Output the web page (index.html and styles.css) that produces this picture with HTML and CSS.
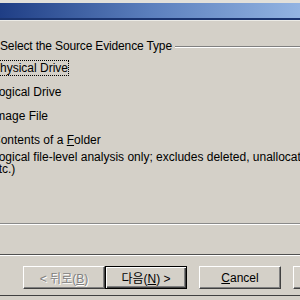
FILE: index.html
```html
<!DOCTYPE html>
<html lang="ko">

<head>
    <meta charset="UTF-8">
    <meta name="viewport" content="width=device-width, initial-scale=1.0">
    <title>Evidence Wizard</title>
    <link rel="stylesheet" href="styles.css">
</head>

<body>
    <div class="dialog">
        <div class="frame-top"></div>
        <div class="titlebar"></div>

        <div class="group">
            <div class="group-title"><span>Select the Source Evidence Type</span></div>
            <div class="options">
                <div class="option"><span class="focus">Physical Drive</span></div>
                <div class="option">Logical Drive</div>
                <div class="option">Image File</div>
                <div class="option">Contents of a <u>F</u>older</div>
                <div class="note">Logical file-level analysis only; excludes deleted, unallocated,<br>etc.)</div>
            </div>
        </div>

        <div class="separator"></div>

        <div class="buttons">
            <button class="btn btn-disabled" type="button">&lt; 뒤로(<u>B</u>)</button>
            <button class="btn btn-default" type="button">다음(<u>N</u>) &gt;</button>
            <button class="btn btn-gap" type="button"><u>C</u>ancel</button>
            <button class="btn btn-gap" type="button">Help</button>
        </div>

        <div class="frame-bottom"></div>
    </div>
</body>

</html>
```

FILE: styles.css
```css
body {
    margin: 0;
    padding: 0;
    background-color: #d4d0c8;
    font-family: "Liberation Sans", Arial, "Noto Sans CJK KR", sans-serif;
    font-size: 12px;
    color: #000;
}

.dialog {
    width: 300px;
    height: 300px;
    overflow: hidden;
}

.frame-top {
    height: 3px;
    background: #e2e0da;
}

.titlebar {
    height: 15px;
    background: linear-gradient(to right, #1f3e85, #5b7fbd 50%, #93b4e2);
    border-bottom: 2px solid #1a3470;
    box-shadow: 0 1px #ecebe6;
}

.group {
    height: 184px;
    padding-top: 19px;
    border-bottom: 1px solid #8a8a8a;
    box-shadow: 0 1px #fff;
}

.group-title {
    display: flex;
    line-height: 14px;
    letter-spacing: -0.15px;
    white-space: nowrap;
}

.group-title::after {
    content: "";
    flex: 1;
    height: 0;
    margin: 7px 0 0 3px;
    border-top: 1px solid #808080;
    border-bottom: 1px solid #fff;
}

.options {
    margin: 8px 0 0 -8px;
    white-space: nowrap;
}

.option {
    line-height: 14px;
    margin-bottom: 10px;
}

.focus {
    outline: 1px dotted #000;
    outline-offset: 0;
}

.note {
    margin-top: -6px;
    line-height: 12px;
}

.separator {
    margin-top: 30px;
    border-top: 1px solid #505050;
    border-bottom: 1px solid #fff;
}

.buttons {
    display: flex;
    margin-top: 10px;
    padding-left: 23px;
}

.btn {
    flex: none;
    width: 82px;
    height: 23px;
    box-sizing: border-box;
    padding: 0;
    margin: 0;
    font: inherit;
    color: #000;
    background: #d4d0c8;
    border: 1px solid;
    border-color: #fff #404040 #404040 #fff;
    box-shadow: inset -1px -1px #808080;
    border-radius: 0;
}

.btn-disabled {
    color: #808080;
    text-shadow: 1px 1px #fff;
}

.btn-default {
    border-color: #000;
    box-shadow: inset 1px 1px #fff, inset -1px -1px #404040, inset -2px -2px #808080;
}

.btn-gap {
    margin-left: 12px;
}

.frame-bottom {
    margin-top: 6px;
    height: 4px;
    border-top: 1px solid #404040;
    background: #d4d0c8;
}
```
